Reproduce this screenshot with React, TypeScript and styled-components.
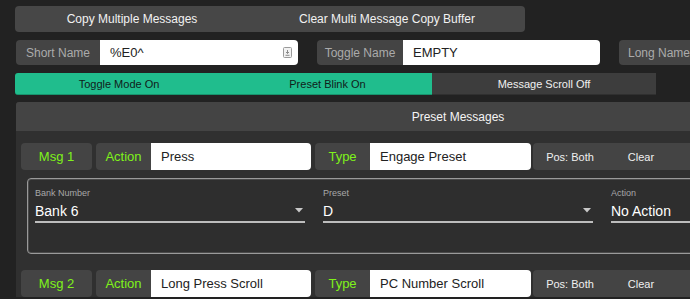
import React, { FunctionComponent } from "react";
import styled, { createGlobalStyle } from "styled-components";

const GlobalStyle = createGlobalStyle`
  body {
    margin: 0;
    background: #222222;
    font-family: "Liberation Sans", Arial, Helvetica, sans-serif;
    overflow: hidden;
  }
`;

const Page = styled.div`
  padding: 6px 0 0 15px;
  width: 920px;
`;

const TopBar = styled.div`
  display: inline-flex;
  height: 26px;
  background: #474747;
  border-radius: 4px;
`;

const TopButton = styled.div<{ $width: number }>`
  display: flex;
  align-items: center;
  justify-content: center;
  width: ${(p) => p.$width}px;
  color: #f2f2f2;
  font-size: 12px;
  white-space: nowrap;
`;

const NameRow = styled.div`
  display: flex;
  gap: 19px;
  margin: 8px 0 0 1px;
  height: 25px;
`;

const NameGroup = styled.div`
  display: flex;
`;

const GroupLabel = styled.div<{ $width: number }>`
  display: flex;
  align-items: center;
  justify-content: center;
  width: ${(p) => p.$width}px;
  background: #444444;
  color: #ababab;
  font-size: 12px;
  border-radius: 4px 0 0 4px;
  white-space: nowrap;
`;

const TextBox = styled.div<{ $width: number }>`
  position: relative;
  display: flex;
  align-items: center;
  width: ${(p) => p.$width}px;
  box-sizing: border-box;
  padding: 0 10px;
  background: #ffffff;
  color: #222;
  font-size: 13px;
  border-radius: 0 4px 4px 0;
  white-space: nowrap;
`;

const FieldIcon = styled.svg`
  position: absolute;
  right: 6px;
  top: 7px;
`;

const ToggleRow = styled.div`
  display: flex;
  height: 22px;
  margin-top: 8px;
`;

const Toggle = styled.div<{ $on: boolean; $width: number; $first?: boolean }>`
  display: flex;
  align-items: center;
  justify-content: center;
  width: ${(p) => p.$width}px;
  background: ${(p) => (p.$on ? "#20bd8d" : "#3d3d3d")};
  color: ${(p) => (p.$on ? "#10201a" : "#f0f0f0")};
  border-bottom: 1px solid ${(p) => (p.$on ? "#17946d" : "#303030")};
  border-radius: ${(p) => (p.$first ? "3px 0 0 3px" : "0")};
  font-size: 11px;
  white-space: nowrap;
`;

const Panel = styled.div`
  width: 884px;
  margin: 7px 0 0 1px;
  background: #303030;
  border-radius: 3px 3px 0 0;
`;

const PanelHeader = styled.div`
  display: flex;
  align-items: center;
  justify-content: center;
  height: 29px;
  background: #444444;
  color: #f4f4f4;
  font-size: 12px;
  border-radius: 3px 3px 0 0;
`;

const PanelBody = styled.div`
  padding: 12px 0 0 5px;
`;

const MsgRow = styled.div<{ $top?: number }>`
  display: flex;
  height: 27px;
  margin-top: ${(p) => p.$top ?? 0}px;
`;

const GreenTag = styled.div<{ $width: number; $round?: boolean; $gap?: number }>`
  display: flex;
  align-items: center;
  justify-content: center;
  width: ${(p) => p.$width}px;
  margin-left: ${(p) => p.$gap ?? 0}px;
  background: #444444;
  color: #7ff21a;
  font-size: 13px;
  border-radius: ${(p) => (p.$round ? "4px" : "4px 0 0 4px")};
`;

const PosBox = styled.div`
  display: flex;
  align-items: center;
  width: 170px;
  margin-left: 2px;
  background: #444444;
  color: #f0f0f0;
  font-size: 11px;
  border-radius: 4px;
`;

const PosItem = styled.span<{ $width: number }>`
  width: ${(p) => p.$width}px;
  text-align: center;
`;

const PresetBox = styled.div`
  display: flex;
  gap: 18px;
  width: 900px;
  height: 76px;
  box-sizing: border-box;
  margin: 8px 0 0 6px;
  padding: 9px 0 0 7px;
  background: #2e2e2e;
  border: 1px solid #9a9a9a;
  box-shadow: inset 0 0 0 1px #4a4a4a;
  border-radius: 4px;
`;

const SelectField = styled.div`
  width: 270px;
  display: flex;
  flex-direction: column;
`;

const SelectLabel = styled.div`
  color: #a8a8a8;
  font-size: 9px;
  height: 12px;
`;

const SelectValue = styled.div`
  display: flex;
  align-items: center;
  justify-content: space-between;
  height: 21px;
  padding-right: 2px;
  color: #ffffff;
  font-size: 14px;
  border-bottom: 2px solid #bdbdbd;
`;

const Caret = () => (
  <svg width="8" height="5" viewBox="0 0 8 5">
    <path d="M0 0 L8 0 L4 4.5 Z" fill="#c8c8c8" />
  </svg>
);

const MsgLine: FunctionComponent<{ n: number; action: string; type: string; top?: number }> = ({
  n,
  action,
  type,
  top,
}) => (
  <MsgRow $top={top}>
    <GreenTag $width={71} $round>
      Msg {n}
    </GreenTag>
    <GreenTag $width={55} $gap={4}>
      Action
    </GreenTag>
    <TextBox $width={160}>{action}</TextBox>
    <GreenTag $width={55} $gap={4}>
      Type
    </GreenTag>
    <TextBox $width={161}>{type}</TextBox>
    <PosBox>
      <PosItem $width={74}>Pos: Both</PosItem>
      <PosItem $width={68}>Clear</PosItem>
    </PosBox>
  </MsgRow>
);

const App: FunctionComponent = () => {
  return (
    <Page>
      <GlobalStyle />
      <TopBar>
        <TopButton $width={234}>Copy Multiple Messages</TopButton>
        <TopButton $width={276}>Clear Multi Message Copy Buffer</TopButton>
      </TopBar>

      <NameRow>
        <NameGroup>
          <GroupLabel $width={84}>Short Name</GroupLabel>
          <TextBox $width={198}>
            %E0^
            <FieldIcon width="9" height="11" viewBox="0 0 9 11">
              <rect x="0.5" y="0.5" width="8" height="10" rx="1" fill="#f2f2f2" stroke="#9a9a9a" />
              <path d="M4.5 3 V6.5 M3 5 L4.5 6.5 L6 5" stroke="#8a8a8a" fill="none" />
              <path d="M2.5 8.3 H6.5" stroke="#8a8a8a" />
            </FieldIcon>
          </TextBox>
        </NameGroup>
        <NameGroup>
          <GroupLabel $width={86}>Toggle Name</GroupLabel>
          <TextBox $width={197}>EMPTY</TextBox>
        </NameGroup>
        <NameGroup>
          <GroupLabel $width={80}>Long Name</GroupLabel>
          <TextBox $width={198}></TextBox>
        </NameGroup>
      </NameRow>

      <ToggleRow>
        <Toggle $on $first $width={208}>
          Toggle Mode On
        </Toggle>
        <Toggle $on $width={209}>
          Preset Blink On
        </Toggle>
        <Toggle $on={false} $width={224}>
          Message Scroll Off
        </Toggle>
      </ToggleRow>

      <Panel>
        <PanelHeader>Preset Messages</PanelHeader>
        <PanelBody>
          <MsgLine n={1} action="Press" type="Engage Preset" />
          <PresetBox>
            <SelectField>
              <SelectLabel>Bank Number</SelectLabel>
              <SelectValue>
                Bank 6
                <Caret />
              </SelectValue>
            </SelectField>
            <SelectField>
              <SelectLabel>Preset</SelectLabel>
              <SelectValue>
                D
                <Caret />
              </SelectValue>
            </SelectField>
            <SelectField>
              <SelectLabel>Action</SelectLabel>
              <SelectValue>
                No Action
                <Caret />
              </SelectValue>
            </SelectField>
          </PresetBox>
          <MsgLine n={2} action="Long Press Scroll" type="PC Number Scroll" top={16} />
        </PanelBody>
      </Panel>
    </Page>
  );
};

export default App;
